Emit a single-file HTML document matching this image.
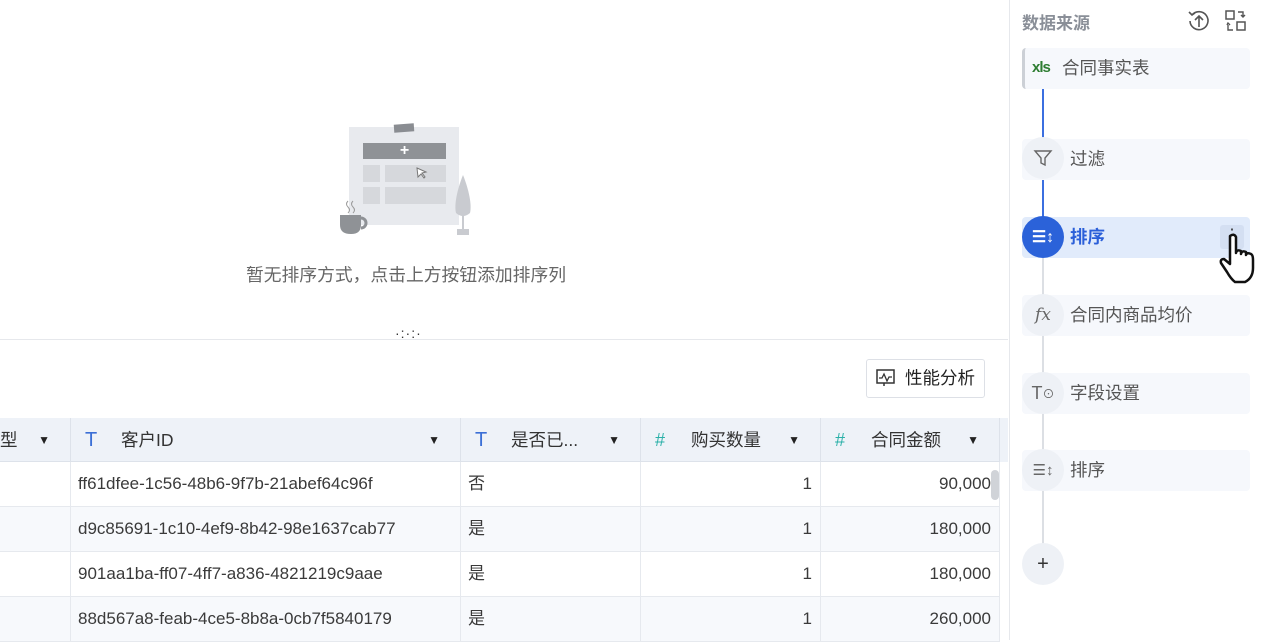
<!DOCTYPE html>
<html><head><meta charset="utf-8"><style>
*{box-sizing:border-box;margin:0;padding:0}
body{width:1264px;height:640px;overflow:hidden;background:#fff;font-family:"Liberation Sans","Noto Sans CJK SC",sans-serif;position:relative;color:#333}
.abs{position:absolute}
.side{left:1009px;top:0;width:255px;height:640px;border-left:1px solid #e6e8ec;background:#fff}
.card{position:absolute;left:1022px;width:228px;height:41px;background:#f6f8fc;border-radius:4px;font-size:17.5px;color:#555;line-height:41px;padding-left:48px}
.circ{position:absolute;left:1022px;width:42px;height:42px;border-radius:50%;background:#eef1f6;display:flex;align-items:center;justify-content:center;color:#666}
.th{position:absolute;top:418px;height:44px;background:#eef2f8;border-right:1px solid #dde2ea;border-bottom:1px solid #dde2ea;font-size:17.5px;line-height:44px;color:#333}
.td{position:absolute;height:45px;border-right:1px solid #e6e9ee;border-bottom:1px solid #e6e9ee;font-size:17px;line-height:44px;color:#3a3a3a;padding:0 8px 0 7px;white-space:nowrap}
.tri{position:absolute;right:14px;top:0;font-size:12px;color:#222}
</style></head><body>
<div class="abs" style="left:349px;top:127px;width:110px;height:98px;background:#e8eaee"></div>
<div class="abs" style="left:394px;top:124px;width:20px;height:8px;background:#8a8d92;transform:rotate(-4deg)"></div>
<div class="abs" style="left:363px;top:143px;width:83px;height:16px;background:#8f9296;color:#fff;text-align:center;font-size:16px;line-height:16px;font-weight:bold">+</div>
<div class="abs" style="left:363px;top:165px;width:17px;height:17px;background:#d6d8dc"></div>
<div class="abs" style="left:385px;top:165px;width:61px;height:17px;background:#d6d8dc"></div>
<div class="abs" style="left:363px;top:187px;width:17px;height:17px;background:#d6d8dc"></div>
<div class="abs" style="left:385px;top:187px;width:61px;height:17px;background:#d6d8dc"></div>
<svg class="abs" style="left:416px;top:167px" width="12" height="12"><path d="M1 1L10 5L6 6L9 10L8 11L5 7L2 10Z" fill="#fff" stroke="#777"/></svg>
<svg class="abs" style="left:338px;top:198px" width="36" height="40"><path d="M10 3q-3 3 0 6q3 3 0 6M15 3q-3 3 0 6q3 3 0 6" stroke="#999" fill="none"/><path d="M2 17h21v10q0 9-10 9q-11 0-11-9z" fill="#8f9296"/><path d="M23 20a5 5 0 0 1 0 10" stroke="#8f9296" stroke-width="3" fill="none"/></svg>
<svg class="abs" style="left:452px;top:175px" width="22" height="62"><path d="M11 0C5 15 2 30 4 38q7 6 14 0C20 30 17 15 11 0z" fill="#c9cbd0"/><rect x="10" y="40" width="2" height="14" fill="#c9cbd0"/><rect x="5" y="54" width="12" height="6" fill="#c9cbd0"/></svg>
<div class="abs" style="left:0;top:261px;width:812px;text-align:center;font-size:17.8px;color:#666">暂无排序方式，点击上方按钮添加排序列</div>
<div class="abs" style="left:395px;top:329px;font-size:14px;color:#333;letter-spacing:1px;line-height:8px">·:·:·</div>
<div class="abs" style="left:0;top:339px;width:1008px;height:1px;background:#e6e8ec"></div>
<div class="abs" style="left:866px;top:359px;width:119px;height:39px;border:1px solid #dde0e6;border-radius:3px;font-size:17.5px;line-height:37px;padding-left:38px;color:#222">性能分析</div>
<svg class="abs" style="left:876px;top:369px" width="20" height="18"><rect x="1" y="1" width="17" height="13" fill="none" stroke="#333" stroke-width="1.5"/><path d="M3 9l3 0 2-4 3 7 2-4 3 0" fill="none" stroke="#333" stroke-width="1.3"/><path d="M8 14v3" stroke="#333" stroke-width="1.5"/></svg>
<div class="th" style="left:0;width:71px;padding-left:0">型<span class="tri" style="right:20px">▼</span></div>
<div class="th" style="left:71px;width:390px;padding-left:50px"><span class="abs" style="left:14px;color:#3b6fd6;font-size:20px">T</span>客户ID<span class="tri" style="right:20px">▼</span></div>
<div class="th" style="left:461px;width:180px;padding-left:50px"><span class="abs" style="left:14px;color:#3b6fd6;font-size:20px">T</span>是否已...<span class="tri" style="right:20px">▼</span></div>
<div class="th" style="left:641px;width:180px;padding-left:50px"><span class="abs" style="left:14px;color:#2ab0a8;font-size:18px">#</span>购买数量<span class="tri" style="right:20px">▼</span></div>
<div class="th" style="left:821px;width:179px;padding-left:50px"><span class="abs" style="left:14px;color:#2ab0a8;font-size:18px">#</span>合同金额<span class="tri" style="right:20px">▼</span></div>
<div class="abs" style="left:1000px;top:418px;width:8px;height:44px;background:#eef2f8"></div>
<div class="td" style="left:0;top:462px;width:71px"></div><div class="td" style="left:71px;top:462px;width:390px">ff61dfee-1c56-48b6-9f7b-21abef64c96f</div><div class="td" style="left:461px;top:462px;width:180px">否</div><div class="td" style="left:641px;top:462px;width:180px;text-align:right">1</div><div class="td" style="left:821px;top:462px;width:179px;text-align:right">90,000</div>
<div class="td" style="left:0;top:507px;width:71px;background:#f7f9fc"></div><div class="td" style="left:71px;top:507px;width:390px;background:#f7f9fc">d9c85691-1c10-4ef9-8b42-98e1637cab77</div><div class="td" style="left:461px;top:507px;width:180px;background:#f7f9fc">是</div><div class="td" style="left:641px;top:507px;width:180px;text-align:right;background:#f7f9fc">1</div><div class="td" style="left:821px;top:507px;width:179px;text-align:right;background:#f7f9fc">180,000</div>
<div class="td" style="left:0;top:552px;width:71px"></div><div class="td" style="left:71px;top:552px;width:390px">901aa1ba-ff07-4ff7-a836-4821219c9aae</div><div class="td" style="left:461px;top:552px;width:180px">是</div><div class="td" style="left:641px;top:552px;width:180px;text-align:right">1</div><div class="td" style="left:821px;top:552px;width:179px;text-align:right">180,000</div>
<div class="td" style="left:0;top:597px;width:71px;background:#f7f9fc"></div><div class="td" style="left:71px;top:597px;width:390px;background:#f7f9fc">88d567a8-feab-4ce5-8b8a-0cb7f5840179</div><div class="td" style="left:461px;top:597px;width:180px;background:#f7f9fc">是</div><div class="td" style="left:641px;top:597px;width:180px;text-align:right;background:#f7f9fc">1</div><div class="td" style="left:821px;top:597px;width:179px;text-align:right;background:#f7f9fc">260,000</div>
<div class="abs" style="left:991px;top:470px;width:8px;height:30px;border-radius:4px;background:#d0d3d8"></div>
<div class="abs side"></div>
<div class="abs" style="left:1022px;top:9px;font-size:17px;font-weight:bold;color:#8a8f98">数据来源</div>
<svg class="abs" style="left:1187px;top:9px" width="24" height="24"><path d="M5 6A9 9 0 1 1 3 12" fill="none" stroke="#555" stroke-width="1.6"/><path d="M2 3l3 3 3-2" fill="none" stroke="#555" stroke-width="1.6"/><path d="M12 18V7M8 11l4-4 4 4" fill="none" stroke="#555" stroke-width="1.6"/></svg>
<svg class="abs" style="left:1225px;top:10px" width="22" height="22"><rect x="1" y="1" width="8" height="8" fill="none" stroke="#555" stroke-width="1.5"/><rect x="12" y="12" width="8" height="8" fill="none" stroke="#555" stroke-width="1.5"/><path d="M13 2h5v5M16 5l2 2 2-2M8 20H3v-5M2 15l1-2 2 2" fill="none" stroke="#555" stroke-width="1.4"/></svg>
<div class="abs" style="left:1042px;top:89px;width:2px;height:130px;background:#3b6fe0"></div>
<div class="abs" style="left:1042px;top:258px;width:2px;height:290px;background:#dcdfe4"></div>
<div class="card" style="top:48px;border-left:3px solid #ccd0d6;padding-left:37px">合同事实表</div>
<div class="abs" style="left:1032px;top:59px;font-size:15px;font-weight:bold;color:#2e7d32;letter-spacing:-1px">xls</div>
<div class="card" style="top:139px">过滤</div>
<div class="circ" style="top:137px"><svg width="20" height="20"><path d="M2 3h16l-6 7v7l-4-2v-5z" fill="none" stroke="#666" stroke-width="1.4"/></svg></div>
<div class="card" style="top:217px;background:#e1ebfb;color:#2b5fd9;font-weight:bold">排序</div>
<div class="abs" style="left:1220px;top:225px;width:24px;height:24px;background:#d4dff2;border-radius:3px;text-align:center;line-height:22px;color:#333">⋮</div>
<div class="circ" style="top:216px;background:#2b62d9;color:#fff;font-size:16px;font-weight:bold">☰↕</div>
<svg class="abs" style="left:1218px;top:232px" width="42" height="56"><path d="M12 4q4-3 6 1v16q1-4 5-2v3q1-4 5-2v3q1-3 5-1q2 1 2 6v8q0 10-8 14h-10q-4-3-8-10l-6-9q-1-4 3-4l6 5z" fill="#fff" stroke="#111" stroke-width="2.5" stroke-linejoin="round"/></svg>
<div class="card" style="top:295px">合同内商品均价</div>
<div class="circ" style="top:294px;font-style:italic;font-family:'DejaVu Serif',serif;font-size:17px">fx</div>
<div class="card" style="top:373px">字段设置</div>
<div class="circ" style="top:372px;font-size:18px">T<span style="font-size:12px">⊙</span></div>
<div class="card" style="top:450px">排序</div>
<div class="circ" style="top:449px;font-size:15px">☰↕</div>
<div class="circ" style="top:543px;font-size:20px;color:#333">+</div>
</body></html>
